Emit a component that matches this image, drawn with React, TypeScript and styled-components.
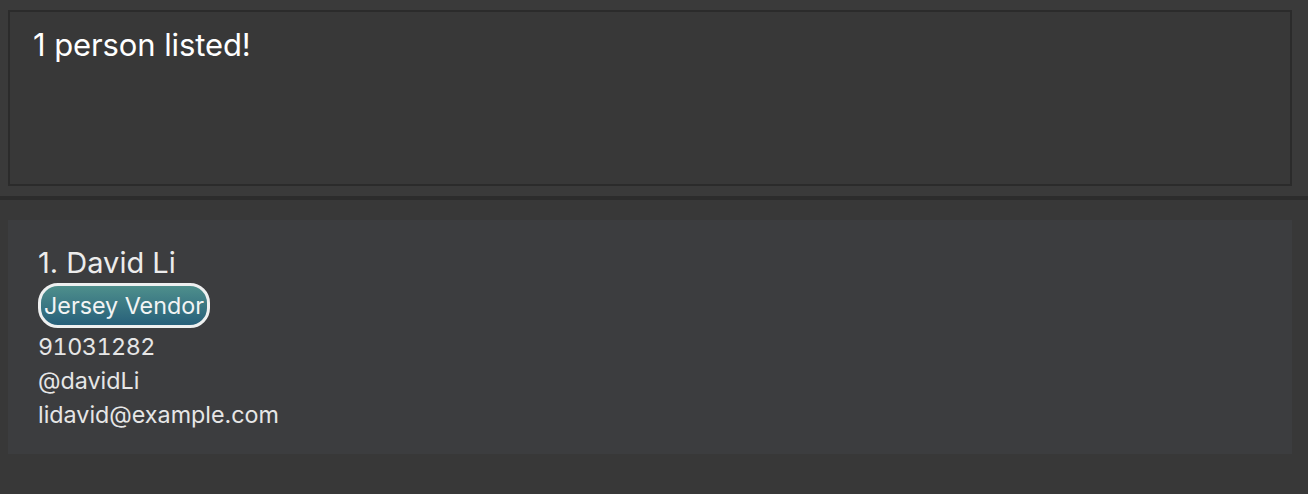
import React from 'react'
import styled, { createGlobalStyle } from 'styled-components'

const GlobalStyle = createGlobalStyle`
  html, body {
    margin: 0;
    padding: 0;
    background: #383838;
  }
  body {
    font-family: Inter, "Noto Sans", "Liberation Sans", sans-serif;
    color: #ffffff;
  }
`

interface Person {
  name: string
  tags: string[]
  phone: string
  handle: string
  email: string
}

const people: Person[] = [
  {
    name: 'David Li',
    tags: ['Jersey Vendor'],
    phone: '91031282',
    handle: '@davidLi',
    email: 'lidavid@example.com',
  },
]

const Window = styled.div`
  width: 1308px;
  height: 494px;
  display: flex;
  flex-direction: column;
  background: #3a3a3a;
`

const ResultPane = styled.section`
  padding: 10px 16px 10px 8px;
  background: #3a3a3a;
`

const ResultBox = styled.div`
  height: 176px;
  box-sizing: border-box;
  border: 2px solid #2b2b2b;
  background: #383838;
  padding: 13px 23px;
  font-size: 31px;
  line-height: 40px;
  letter-spacing: -0.1px;
  color: #ffffff;
`

const Divider = styled.div`
  height: 4px;
  background: #2c2c2c;
`

const ListPane = styled.section`
  flex: 1;
  padding: 20px 16px 0 8px;
  background: #383838;
`

const Card = styled.div`
  background: #3c3d3f;
  height: 234px;
  box-sizing: border-box;
  padding: 24px 30px;
  display: flex;
  flex-direction: column;
  align-items: flex-start;
`

const Name = styled.div`
  font-size: 29px;
  line-height: 38px;
  color: #ececec;
`

const Tags = styled.div`
  display: flex;
  gap: 6px;
  margin: 1px 0 2px;
`

const Tag = styled.span`
  box-sizing: border-box;
  height: 45px;
  padding: 0 3px;
  display: flex;
  align-items: center;
  border: 3px solid #eef0f0;
  border-radius: 20px;
  background: linear-gradient(#4e8f8c, #27607a);
  color: #f2f4f4;
  font-size: 23.3px;
`

const Detail = styled.div<{ $numeric?: boolean }>`
  font-size: 23.3px;
  line-height: 34px;
  color: #e6e6e6;
  font-variant-numeric: ${(p) => (p.$numeric ? 'tabular-nums' : 'normal')};
  letter-spacing: ${(p) => (p.$numeric ? '-0.5px' : '0')};
`

export default function App() {
  return (
    <>
      <GlobalStyle />
      <Window>
        <ResultPane>
          <ResultBox>
            {people.length} {people.length === 1 ? 'person' : 'persons'} listed!
          </ResultBox>
        </ResultPane>
        <Divider />
        <ListPane>
          {people.map((p, i) => (
            <Card key={p.email}>
              <Name>
                {i + 1}. {p.name}
              </Name>
              <Tags>
                {p.tags.map((t) => (
                  <Tag key={t}>{t}</Tag>
                ))}
              </Tags>
              <Detail $numeric>{p.phone}</Detail>
              <Detail>{p.handle}</Detail>
              <Detail>{p.email}</Detail>
            </Card>
          ))}
        </ListPane>
      </Window>
    </>
  )
}
